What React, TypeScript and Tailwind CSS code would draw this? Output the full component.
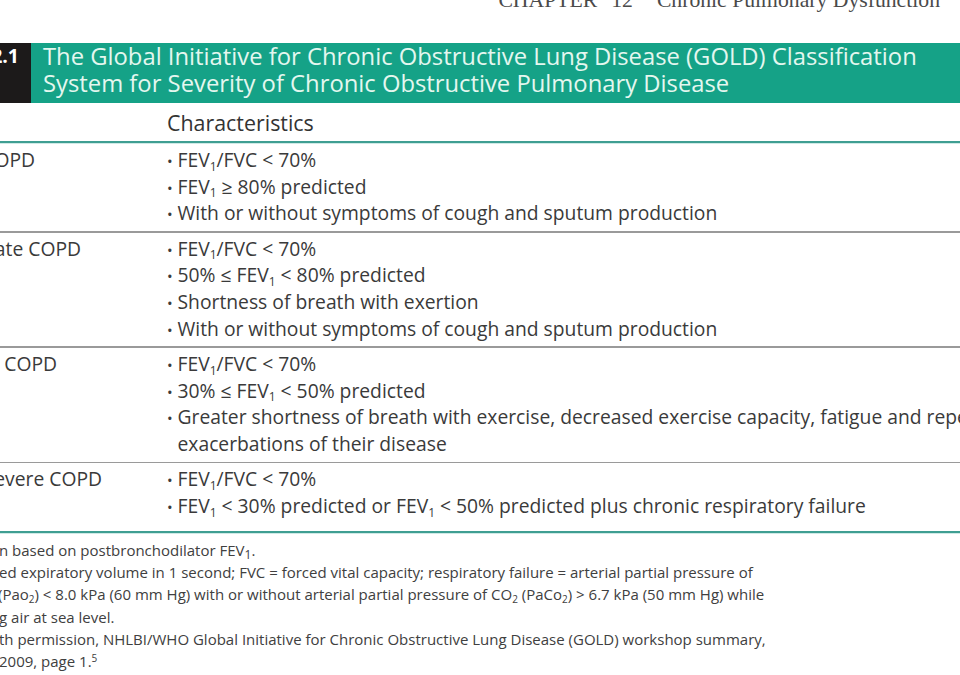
import React from "react";

const F = () => (
  <>
    FEV<sub className="text-[12px] bottom-[-0.3em]">1</sub>
  </>
);

type Row = { label: string; lw: string; lines: React.ReactNode[]; last?: boolean };

const rows: Row[] = [
  {
    label: "Mild COPD",
    lw: "w-[35px]",
    lines: [
      <><F />/FVC &lt; 70%</>,
      <><F /> ≥ 80% predicted</>,
      <>With or without symptoms of cough and sputum production</>,
    ],
  },
  {
    label: "Moderate COPD",
    lw: "w-[81px]",
    lines: [
      <><F />/FVC &lt; 70%</>,
      <>50% ≤ <F /> &lt; 80% predicted</>,
      <>Shortness of breath with exertion</>,
      <>With or without symptoms of cough and sputum production</>,
    ],
  },
  {
    label: "Severe COPD",
    lw: "w-[57px]",
    lines: [
      <><F />/FVC &lt; 70%</>,
      <>30% ≤ <F /> &lt; 50% predicted</>,
      <>
        Greater shortness of breath with exercise, decreased exercise capacity, fatigue and repeated
        <br />
        exacerbations of their disease
      </>,
    ],
  },
  {
    label: "Very severe COPD",
    lw: "w-[102px]",
    last: true,
    lines: [
      <><F />/FVC &lt; 70%</>,
      <><F /> &lt; 30% predicted or <F /> &lt; 50% predicted plus chronic respiratory failure</>,
    ],
  },
];

export default function App() {
  return (
    <div className="w-[960px] h-[675px] overflow-hidden bg-white text-[#3a3a3a] font-['Open_Sans',sans-serif]">
      {/* running head */}
      <div className="mt-[-10px] h-[21px] leading-[21px] flex justify-end pr-[20px] font-['Liberation_Serif',serif] text-[21.7px] text-[#4a4a4a] whitespace-nowrap">
        <span>CHAPTER</span>
        <span className="ml-[14px]">12</span>
        <span className="ml-[24px]">Chronic Pulmonary Dysfunction</span>
      </div>

      {/* title band */}
      <div className="mt-[32px] h-[60px] flex">
        <div className="w-[31px] shrink-0 bg-[#1c1a1a] flex justify-end pr-[12px]">
          <span className="shrink-0 whitespace-nowrap text-white font-bold text-[19.5px] leading-[26.7px]">12.1</span>
        </div>
        <div className="flex-1 bg-[#15a287] pl-[12px] text-[#e4f7ef] text-[23.8px] leading-[26.7px] whitespace-nowrap">
          <div>The Global Initiative for Chronic Obstructive Lung Disease (GOLD) Classification</div>
          <div>System for Severity of Chronic Obstructive Pulmonary Disease</div>
        </div>
      </div>

      {/* column header */}
      <div className="h-[38px] pl-[167px] pt-[1px] text-[21.4px] leading-[38px] text-[#333]">Characteristics</div>
      <div className="h-[2px] bg-[#3f9e92]" />
      <div className="h-[1px] bg-[#cfeae6]" />

      {/* rows */}
      {rows.map((r, i) => (
        <div key={i}>
          <div className={`flex text-[19.3px] leading-[26.7px] pt-[3px] ${r.last ? "pb-[11px]" : "pb-[4px]"}`}>
            <div className="w-[167px] shrink-0">
              <div className={`${r.lw} flex justify-end`}>
                <span className="shrink-0 whitespace-nowrap">{r.label}</span>
              </div>
            </div>
            <div className="flex-1 min-w-0">
              {r.lines.map((l, j) => (
                <div key={j} className="pl-[10.5px] indent-[-10.5px] whitespace-nowrap">
                  <span className="inline-block w-[10.5px] indent-0 text-[15px] leading-none">•</span>
                  {l}
                </div>
              ))}
            </div>
          </div>
          {r.last ? (
            <>
              <div className="h-[2px] bg-[#3f9e92]" />
              <div className="h-[1px] bg-[#cfeae6]" />
            </>
          ) : (
            <div className="h-[1.5px] bg-[#9a9a9a]" />
          )}
        </div>
      ))}

      {/* footnotes */}
      <div className="pt-[5px] text-[15px] leading-[22.3px] text-[#404040] whitespace-nowrap">
        <div className="ml-[-1px]">n based on postbronchodilator <F />.</div>
        <div className="ml-[-1px]">ed expiratory volume in 1 second; FVC = forced vital capacity; respiratory failure = arterial partial pressure of</div>
        <div className="ml-[-2px]">
          (Pao<sub className="text-[10px]">2</sub>) &lt; 8.0 kPa (60 mm Hg) with or without arterial partial pressure of CO
          <sub className="text-[10px]">2</sub> (PaCo<sub className="text-[10px]">2</sub>) &gt; 6.7 kPa (50 mm Hg) while
        </div>
        <div className="ml-[-1px]">g air at sea level.</div>
        <div className="ml-[-1px]">th permission, NHLBI/WHO Global Initiative for Chronic Obstructive Lung Disease (GOLD) workshop summary,</div>
        <div className="ml-[-1px]">
          2009, page 1.<sup className="text-[10px]">5</sup>
        </div>
      </div>
    </div>
  );
}
